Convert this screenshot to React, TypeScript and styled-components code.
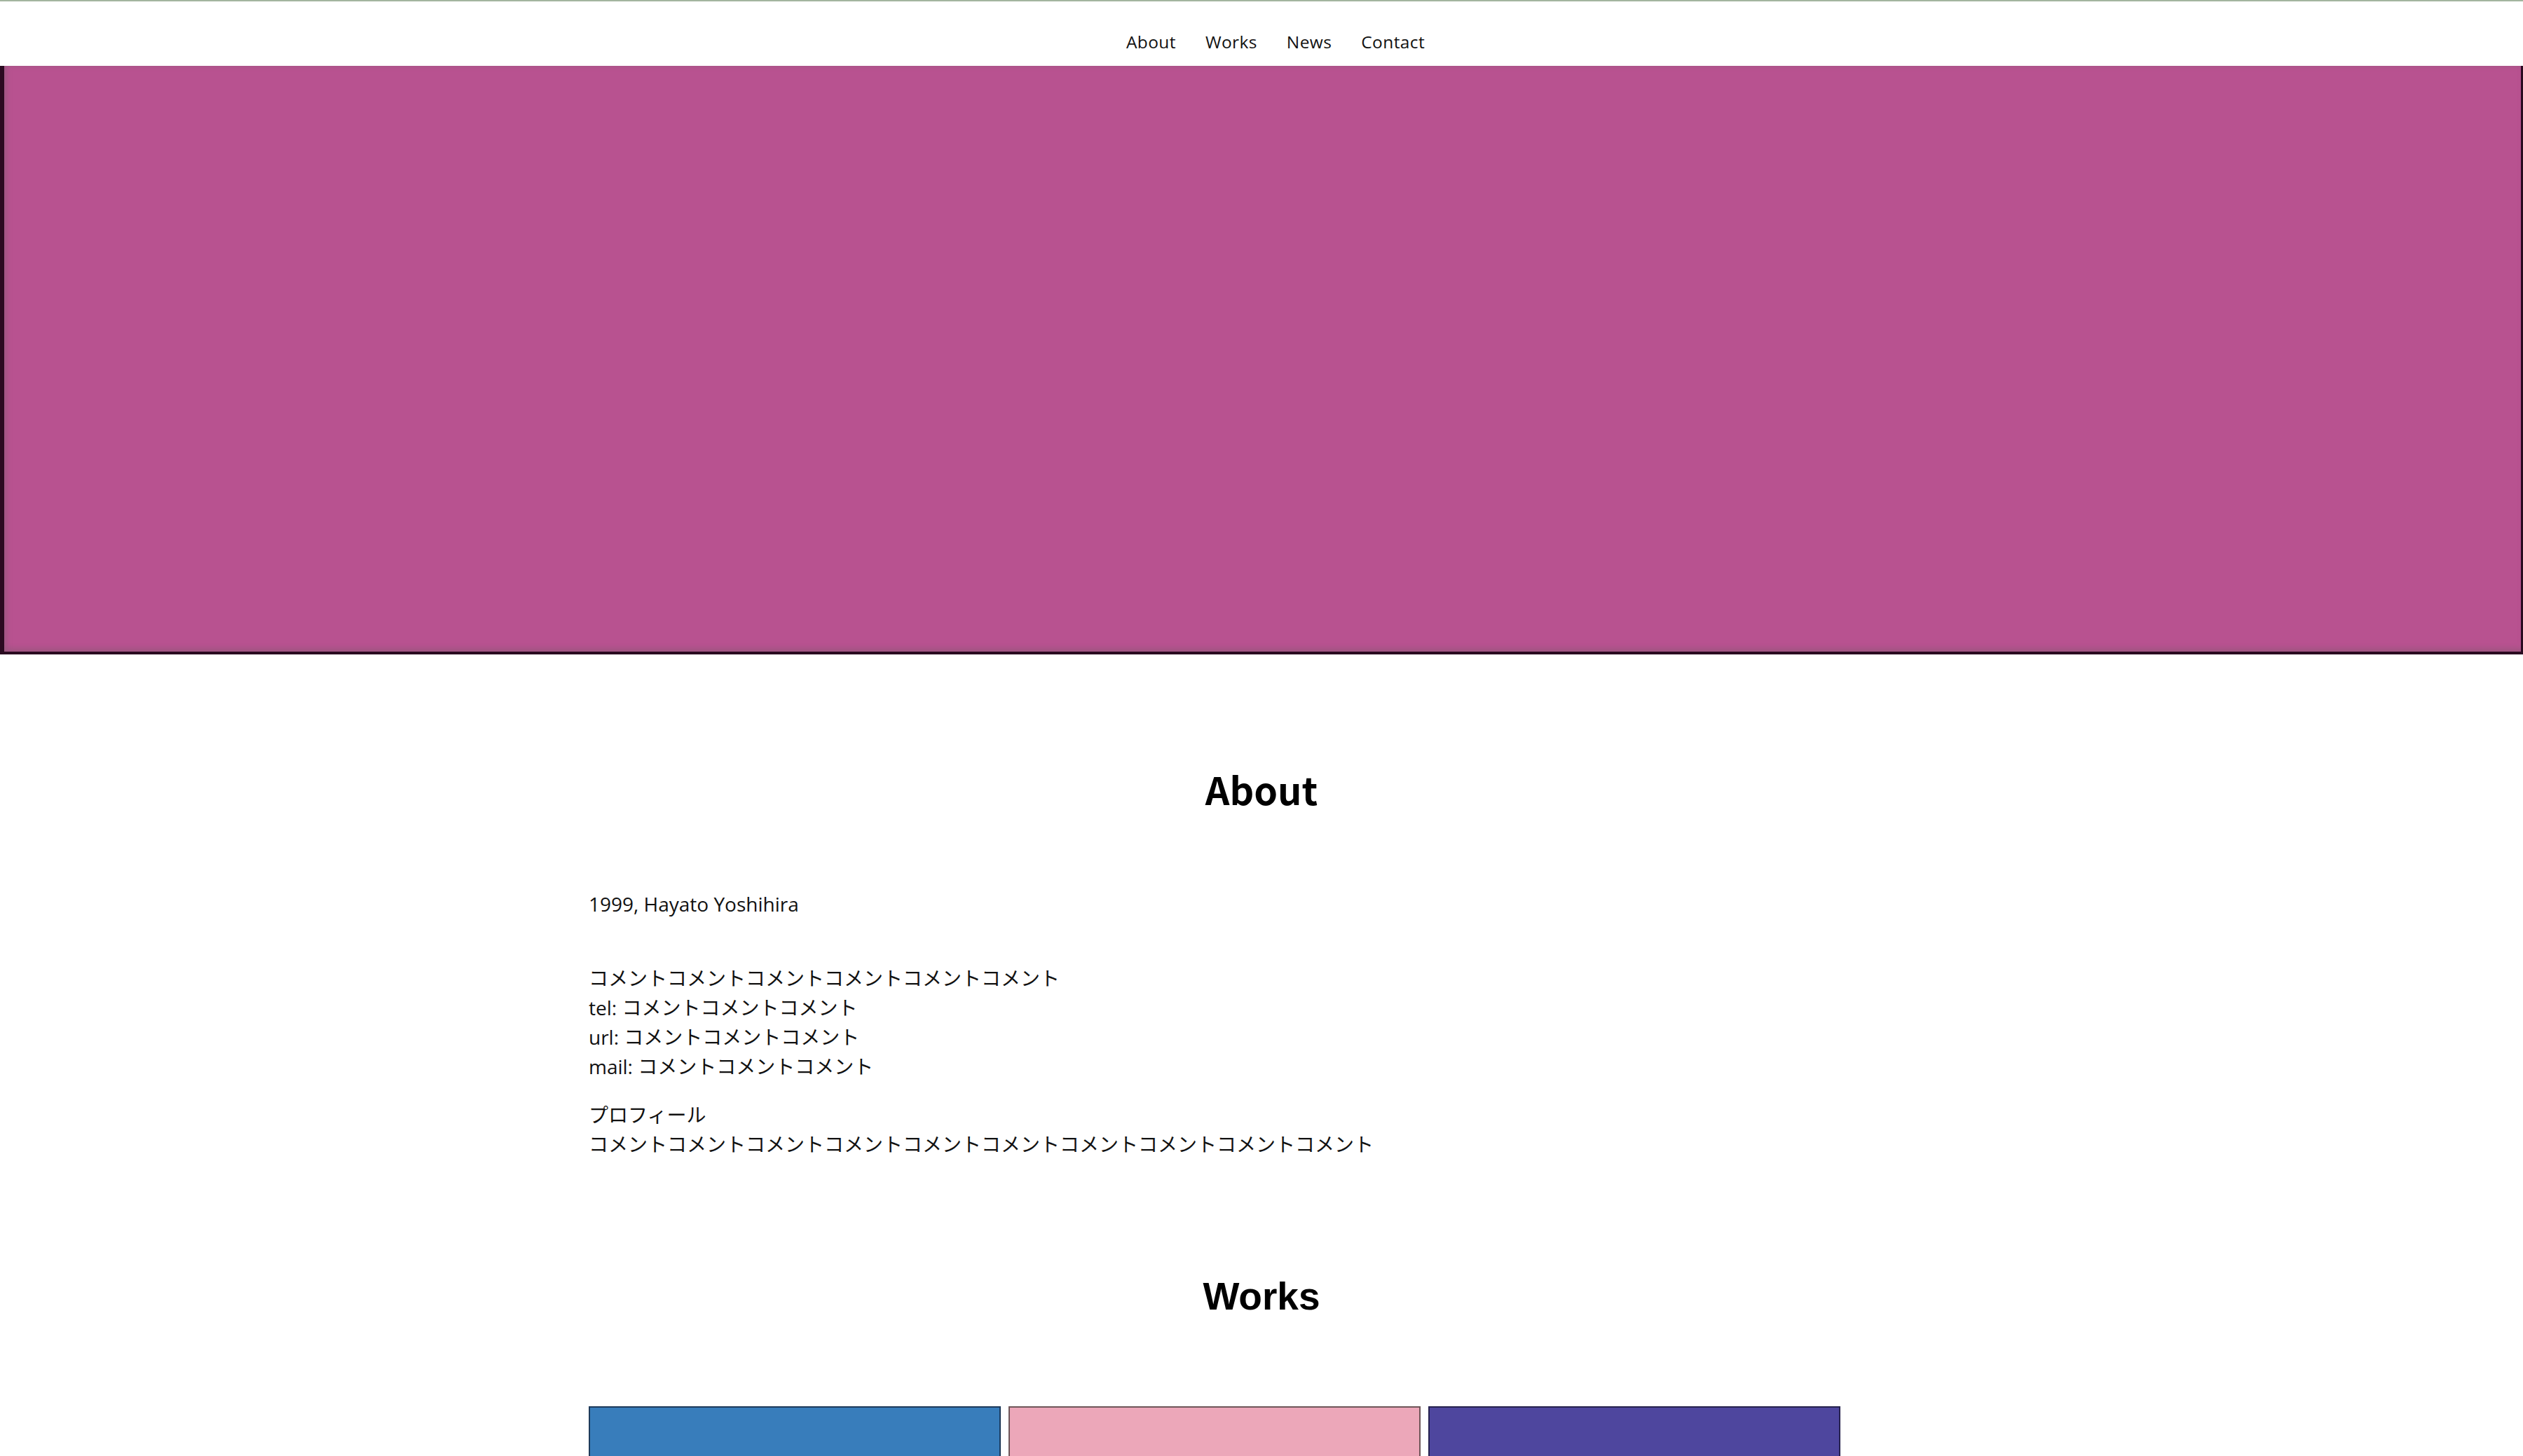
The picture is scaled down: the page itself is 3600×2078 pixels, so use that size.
import React from "react";
import styled, { createGlobalStyle } from "styled-components";

const GlobalStyle = createGlobalStyle`
  html, body {
    margin: 0;
    padding: 0;
    background: #ffffff;
  }
  body {
    font-family: "Open Sans", "Noto Sans CJK JP", sans-serif;
    color: #111111;
  }
  * { box-sizing: border-box; }
`;

const Header = styled.header`
  border-top: 2px solid #a3b59f;
  height: 94px;
  display: flex;
  justify-content: center;
  padding-top: 37px;
`;

const Nav = styled.nav`
  display: flex;
  gap: 42px;
  height: 42px;
  align-items: center;
  padding-left: 40px;
`;

const NavLink = styled.a`
  font-family: "Open Sans", "Noto Sans CJK JP", sans-serif;
  font-size: 24.5px;
  line-height: 42px;
  color: #111111;
  text-decoration: none;
  letter-spacing: 0.4px;
`;

const Hero = styled.div`
  height: 840px;
  width: 100%;
  background: #b85290;
  box-shadow:
    inset 6px 0 0 #2a0a20,
    inset -3px 0 0 #2a0a20,
    inset 0 -4px 0 #2a0a20,
    inset 10px 0 6px rgba(140, 90, 120, 0.6),
    inset 0 -9px 6px rgba(140, 90, 120, 0.5);
`;

const Container = styled.main`
  width: 1920px;
  margin: 0 auto;
  padding-top: 150px;
`;

const Section = styled.section<{ $gapAfter?: number }>`
  margin-bottom: ${(p) => p.$gapAfter ?? 0}px;
`;

const Heading = styled.h2<{ $jp?: boolean }>`
  margin: 0;
  text-align: center;
  font-size: ${(p) => (p.$jp ? 54 : 55)}px;
  line-height: 84px;
  font-weight: 700;
  color: #000000;
  font-family: ${(p) =>
    p.$jp
      ? `"Noto Sans CJK JP", "Liberation Sans", sans-serif`
      : `"Liberation Sans", "Noto Sans CJK JP", sans-serif`};
`;

const Text = styled.p<{ $top: number }>`
  margin: ${(p) => p.$top}px 0 0 0;
  font-size: 28px;
  line-height: 42px;
  color: #111111;
  font-family: "Open Sans", "Noto Sans CJK JP", sans-serif;
`;

const Cards = styled.div`
  margin-top: 115px;
  display: flex;
  gap: 11px;
`;

const Card = styled.div<{ $bg: string; $edge: string }>`
  width: 588px;
  height: 400px;
  background: ${(p) => p.$bg};
  border: 2px solid ${(p) => p.$edge};
`;

const cards = [
  { bg: "#387dbb", edge: "#1e3a5a" },
  { bg: "#eca7b9", edge: "#6e5658" },
  { bg: "#4e469e", edge: "#26224e" },
];

export default function App() {
  return (
    <>
      <GlobalStyle />
      <Header>
        <Nav>
          <NavLink href="#about">About</NavLink>
          <NavLink href="#works">Works</NavLink>
          <NavLink href="#news">News</NavLink>
          <NavLink href="#contact">Contact</NavLink>
        </Nav>
      </Header>
      <Hero />
      <Container>
        <Section id="about" $gapAfter={154}>
          <Heading $jp>About</Heading>
          <Text $top={101}>1999, Hayato Yoshihira</Text>
          <Text $top={64}>
            コメントコメントコメントコメントコメントコメント
            <br />
            tel: コメントコメントコメント
            <br />
            url: コメントコメントコメント
            <br />
            mail: コメントコメントコメント
          </Text>
          <Text $top={27}>
            プロフィール
            <br />
            コメントコメントコメントコメントコメントコメントコメントコメントコメントコメント
          </Text>
        </Section>
        <Section id="works">
          <Heading>Works</Heading>
          <Cards>
            {cards.map((c, i) => (
              <Card key={i} $bg={c.bg} $edge={c.edge} />
            ))}
          </Cards>
        </Section>
      </Container>
    </>
  );
}
